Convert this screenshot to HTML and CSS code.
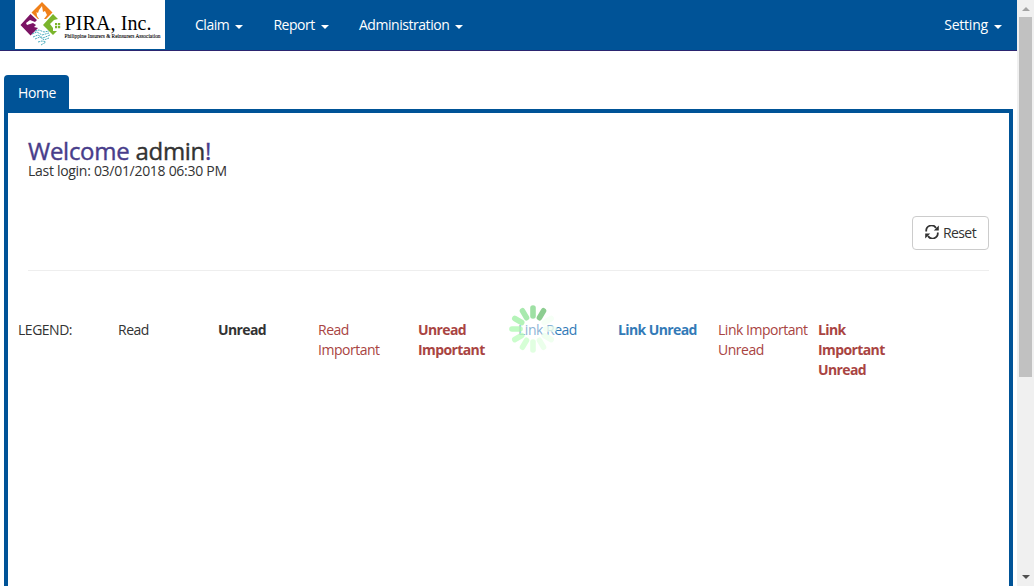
FILE: index.html
```html
<!DOCTYPE html>
<html lang="en">
<head>
<meta charset="utf-8">
<title>PIRA, Inc.</title>
<link rel="stylesheet" href="styles.css">
</head>
<body>
<div class="page">
  <nav class="navbar">
    <a class="brand">
      <svg width="150" height="49" viewBox="0 0 150 49">
        <path class="orange" d="M27 2L37.500 12.500 31 19H29L32 15 30 11 28 12 27 6 24 10 23 13 21.500 12 22 16 24 19 23 19 16.500 12.500z"/>
        <path class="purple" d="M15.500 14L22 20 20 22 15 20 11 23 12 25 18 23 21 25 19 27 23 28 15.500 35.500 5.500 25z"/>
        <path class="green" d="M38 14L43 19 39 20 35 24 38 28 38 31 42 31 38 35 28 25z M40 23h2.200v2.200h-2.200z M43 23h2.200v2.200h-2.200z M40 26h2.200v2.200h-2.200z M43 26h2.200v2.200h-2.200z"/>
        <path class="teal" d="M20 31l4-1 5 2 5-1M17 34l5-2 5 3 7-2M18 37l5-2 5 3 7-3M20 39l5-2 4 3 5-2M23 42l4-1 4 1M26 45l5-3"/>
        <text class="logo-name" x="49.500" y="30" textLength="87" lengthAdjust="spacing">PIRA, Inc.</text>
        <text class="logo-sub" x="49.500" y="37.500" textLength="96" lengthAdjust="spacingAndGlyphs">Philippine Insurers &amp; Reinsurers Association</text>
      </svg>
    </a>
    <a class="nav-link claim">Claim<i class="caret"></i></a>
    <a class="nav-link report">Report<i class="caret"></i></a>
    <a class="nav-link admin">Administration<i class="caret"></i></a>
    <a class="nav-link setting">Setting<i class="caret"></i></a>
  </nav>
  <div class="tabs"><a class="tab">Home</a></div>
  <main class="panel">
    <h1 class="welcome">Welcome <span class="user">admin</span>!</h1>
    <p class="login">Last login: 03/01/2018 06:30 PM</p>
    <div class="actions">
      <button class="reset">
        <svg width="14" height="14" viewBox="0 0 14 14"><path class="arc" d="M1.200 6.500V6A5.300 5.300 0 0 1 11 3M12.800 7.500V8A5.300 5.300 0 0 1 3 11"/><path class="head" d="M13.800.500V5.500H8.800zM.200 13.500V8.500H5.200z"/></svg>
        <span>Reset</span>
      </button>
    </div>
    <hr class="rule">
    <div class="legend">
      <span class="item">LEGEND:</span>
      <span class="item">Read</span>
      <span class="item bold">Unread</span>
      <span class="item red">Read Important</span>
      <span class="item bold red">Unread Important</span>
      <span class="item link spinner-host">Link Read
        <svg class="spinner" width="50" height="50" viewBox="-25 -25 50 50">
          <circle class="haze" r="22"/>
          <path stroke="#8edb95" d="M0-13V-21"/>
          <path stroke="#78c57d" d="M6.500-11.300L10.500-18.200"/>
          <path stroke="#f5fff5" d="M11.300-6.500L18.200-10.500"/>
          <path stroke="#f2fff2" d="M13 0H21"/>
          <path stroke="#eeffee" d="M11.300 6.500L18.200 10.500"/>
          <path stroke="#e8ffe8" d="M6.500 11.300L10.500 18.200"/>
          <path stroke="#dcffdc" d="M0 13V21"/>
          <path stroke="#d0ffd0" d="M-6.500 11.300L-10.500 18.200"/>
          <path stroke="#c3fdc4" d="M-11.300 6.500L-18.200 10.500"/>
          <path stroke="#b5fab8" d="M-13 0H-21"/>
          <path stroke="#a8f2ac" d="M-11.300-6.500L-18.200-10.500"/>
          <path stroke="#9ae6a0" d="M-6.500-11.300L-10.500-18.200"/>
        </svg>
      </span>
      <span class="item bold link">Link Unread</span>
      <span class="item red important-link">Link Important Unread</span>
      <span class="item bold red">Link Important Unread</span>
    </div>
  </main>
</div>
<div class="scrollbar">
  <i class="arrow up"></i>
  <div class="thumb"></div>
  <i class="arrow down"></i>
</div>
</body>
</html>
```
FILE: styles.css
```css
* { box-sizing: border-box; }
body {
  margin: 0;
  width: 1034px;
  height: 586px;
  display: flex;
  overflow: hidden;
  background: #fff;
  color: #333;
  font: 14px/20px "Open Sans", "Noto Sans", sans-serif;
}
.page { width: 1017px; height: 586px; display: flex; flex-direction: column; }
.navbar {
  height: 51px;
  flex: none;
  display: flex;
  background: #005397;
  border-bottom: 1px solid #2b2570;
  padding-left: 15px;
}
.brand { width: 150px; height: 49px; background: #fff; margin-right: 15px; }
.brand svg { display: block; overflow: visible; }
.orange { fill: #f08019; }
.purple { fill: #7b1464; }
.green { fill: #7bb52c; }
.teal { fill: none; stroke: #35a3b5; stroke-width: .9; stroke-dasharray: 2 .8; }
.logo-name { font: 20px "Liberation Serif", serif; fill: #000; }
.logo-sub { font: 6px "Liberation Serif", serif; fill: #000; stroke: #000; stroke-width: .1; }
.nav-link {
  display: flex;
  align-items: center;
  padding: 0 15px;
  color: #fff;
  white-space: nowrap;
  letter-spacing: -.45px;
}
.caret {
  border: 4px solid transparent;
  border-top-color: #fff;
  border-bottom: 0;
  margin: 4px 0 0 6px;
}
.setting { margin-left: auto; letter-spacing: -.2px; }
.tabs { height: 58px; flex: none; padding: 24px 0 0 4px; display: flex; }
.tab {
  width: 65px;
  padding: 8px 0 0 14px;
  color: #fff;
  background: #005397;
  border-radius: 4px 4px 0 0;
  letter-spacing: -.4px;
}
.panel {
  width: 1009px;
  margin-left: 4px;
  flex: 1;
  border: 4px solid #005397;
  border-bottom: 0;
  padding: 0 10px;
}
.welcome {
  margin: 25px 0 0 10px;
  font-size: 24px;
  line-height: 26px;
  font-weight: 400;
  letter-spacing: -.27px;
  color: #483d8b;
  -webkit-text-stroke: .4px currentColor;
}
.user { color: #333; }
.login { margin: -3px 0 0 10px; letter-spacing: -.29px; }
.actions { display: flex; justify-content: flex-end; margin: 35px 10px 0 0; }
.reset {
  display: flex;
  align-items: center;
  width: 77px;
  height: 34px;
  padding: 0 12px;
  gap: 4px;
  border: 1px solid #ccc;
  border-radius: 4px;
  background: #fff;
  color: #333;
  font: inherit;
  letter-spacing: -.6px;
}
.reset svg { flex: none; margin-top: -2px; }
.arc { fill: none; stroke: #333; stroke-width: 1.8; }
.head { fill: #333; }
.rule { height: 1px; margin: 20px 10px 49px; border: 0; background: #eee; }
.legend { display: flex; letter-spacing: -.48px; }
.item { width: 100px; flex: none; padding-right: 5px; }
.item.bold { font-weight: 700; letter-spacing: -.6px; }
.item.red { color: #a94442; }
.item.link { color: #337ab7; }
.item.important-link { padding-right: 0; }
.spinner-host { position: relative; }
.spinner {
  position: absolute;
  left: -10px;
  top: -16px;
  fill: none;
  stroke-width: 5.6;
  stroke-linecap: round;
  opacity: .85;
}
.haze { fill: #fff; fill-opacity: .5; }
.scrollbar {
  width: 17px;
  background: #f0f0f0;
  display: flex;
  flex-direction: column;
  align-items: center;
}
.thumb { width: 13px; height: 360px; margin-top: 6px; background: #c1c1c1; }
.arrow { border: 4px solid transparent; }
.up { border-top: 0; border-bottom-color: #a3a3a3; margin-top: 7px; }
.down { border-bottom: 0; border-top-color: #505050; margin: auto 0 7px; }
```
